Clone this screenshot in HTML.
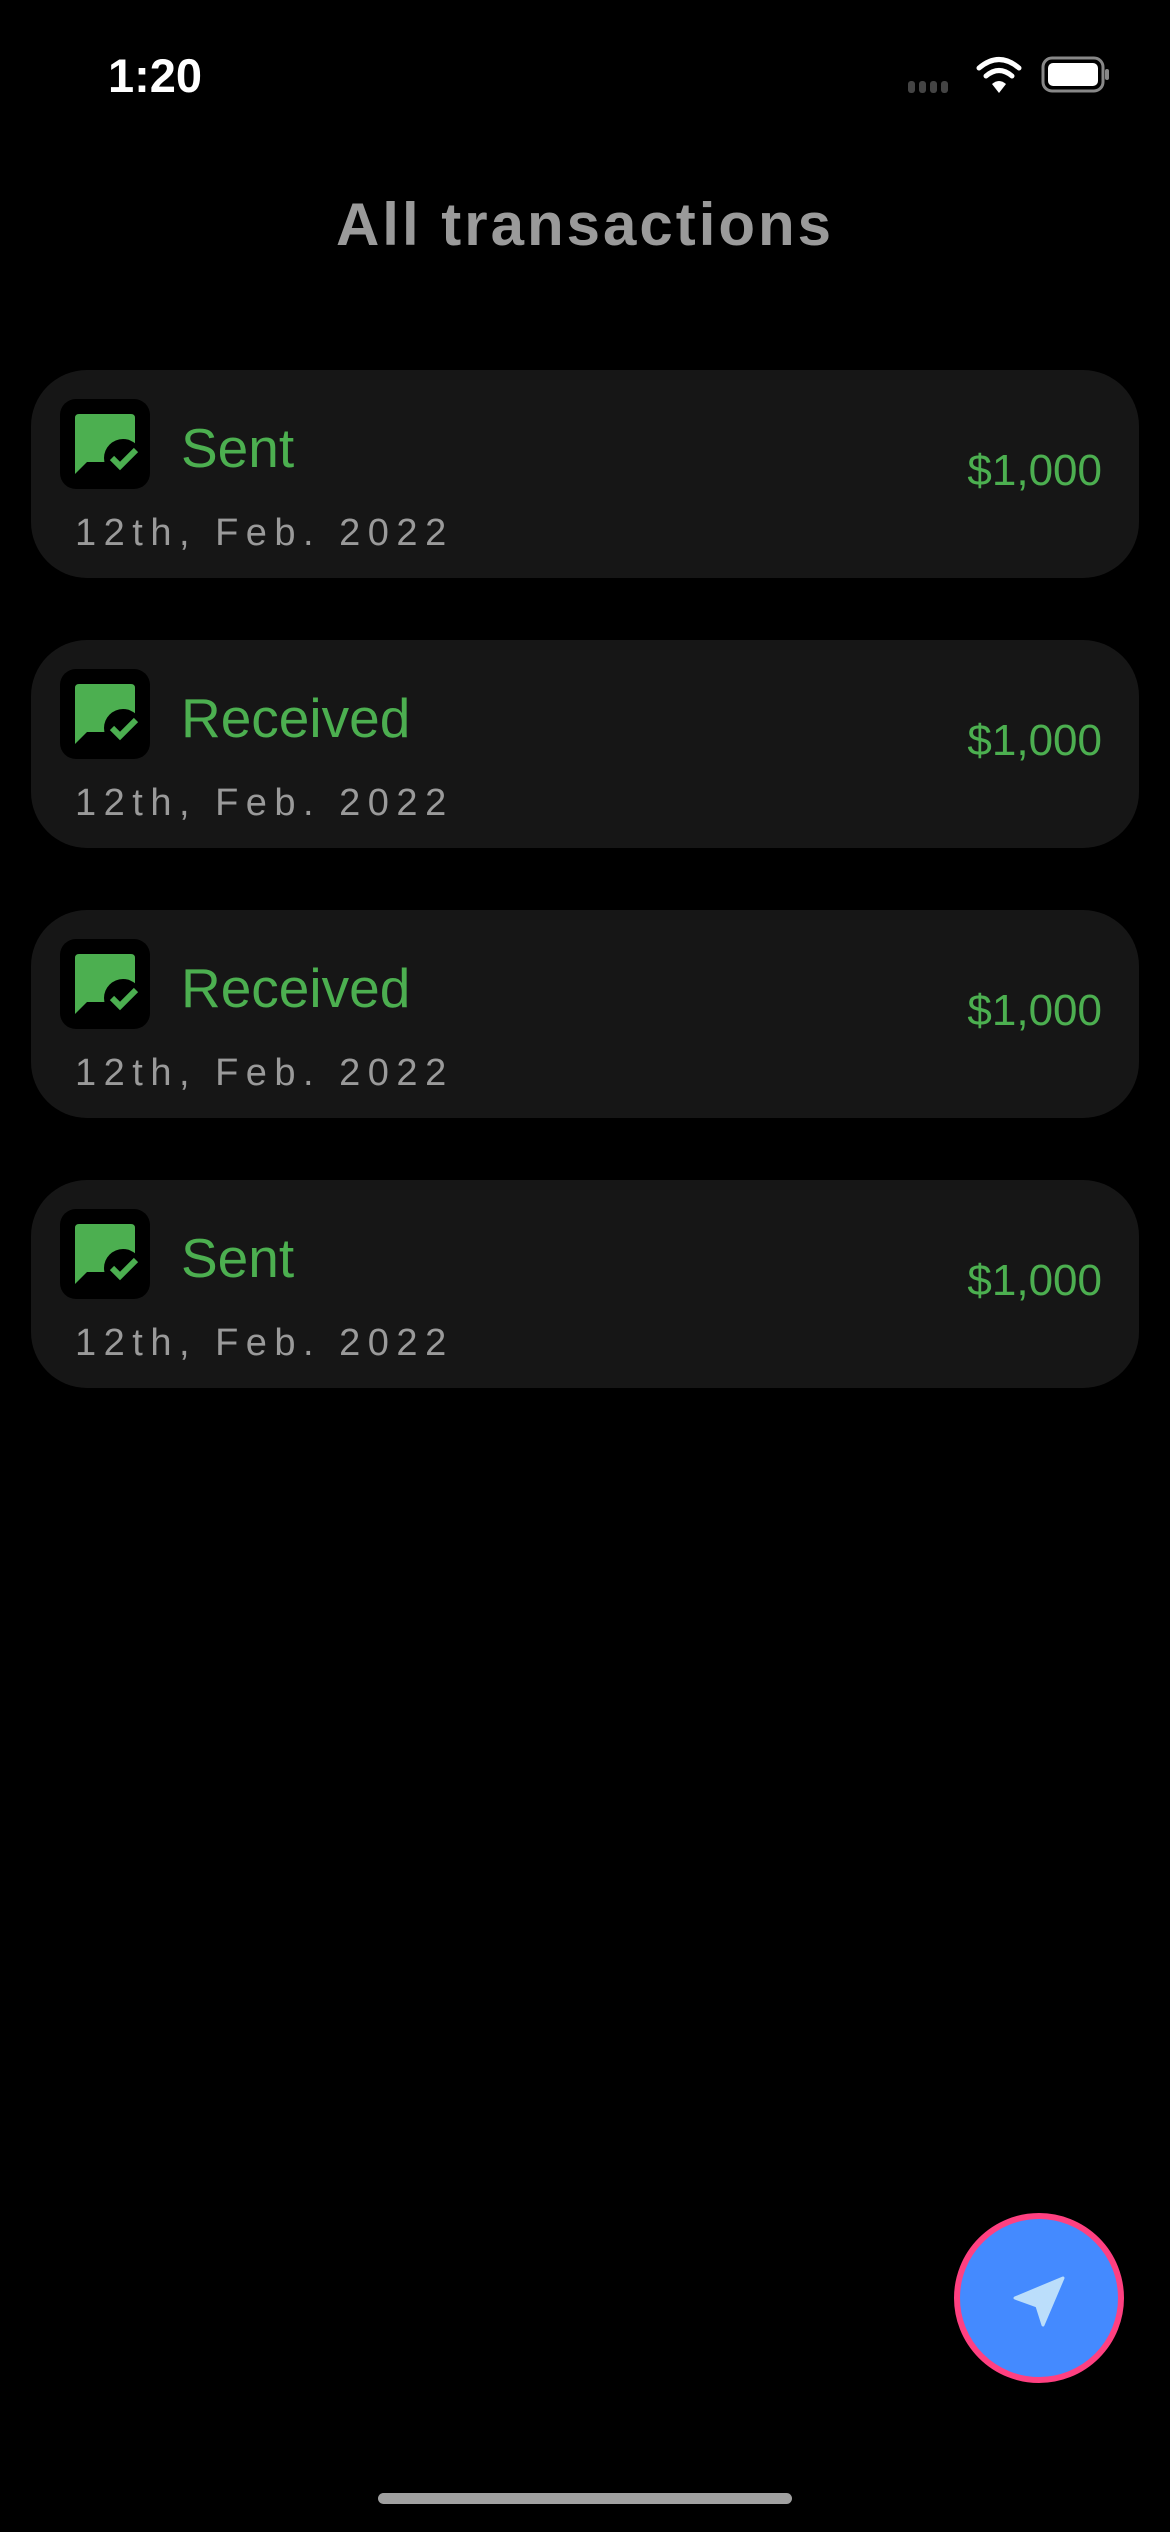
<!DOCTYPE html>
<html><head><meta charset="utf-8"><style>
html,body{margin:0;padding:0;background:#000;}
body{width:1170px;height:2532px;position:relative;overflow:hidden;font-family:"Liberation Sans",sans-serif;}
.time{position:absolute;left:108px;top:48px;font-size:47px;font-weight:bold;color:#fff;}
.title{position:absolute;left:0;width:1170px;top:190px;text-align:center;font-size:60px;font-weight:bold;color:#9a9a9a;letter-spacing:3px;}
.card{position:absolute;left:31px;width:1108px;height:208px;background:#161616;border-radius:56px;}
.icon{position:absolute;left:29px;top:29px;width:90px;height:90px;background:#000;border-radius:16px;}
.name{position:absolute;left:150px;top:46px;font-size:55px;color:#4caf50;}
.date{position:absolute;left:44px;top:142px;font-size:38px;color:#9a9a9a;letter-spacing:7.5px;}
.amt{position:absolute;right:37px;top:76px;font-size:44px;color:#4caf50;}
.fab{position:absolute;left:954px;top:2213px;width:158px;height:158px;border-radius:50%;background:#448aff;border:6px solid #ff4081;}
.home{position:absolute;left:378px;top:2493px;width:414px;height:11px;border-radius:6px;background:#a0a0a0;}
</style></head><body>
<div class="time">1:20</div>
<svg style="position:absolute;left:905px;top:50px" width="210" height="50" viewBox="0 0 210 50">
<g fill="#444"><rect x="3" y="31" width="7" height="12" rx="3"/><rect x="14" y="31" width="7" height="12" rx="3"/><rect x="25" y="31" width="7" height="12" rx="3"/><rect x="36" y="31" width="7" height="12" rx="3"/></g>
<g fill="none" stroke="#fff" stroke-width="5" stroke-linecap="round"><path d="M74 18 Q94 1 114 18"/><path d="M81 26 Q94 15 107 26"/></g>
<path d="M87 34 Q94 28 101 34 L94 43 Z" fill="#fff"/>
<rect x="138" y="8" width="60" height="33" rx="9" fill="none" stroke="#888" stroke-width="3"/>
<rect x="143" y="13" width="50" height="23" rx="5" fill="#fff"/>
<rect x="200" y="19" width="4" height="11" rx="2" fill="#888"/>
</svg>
<div class="title">All transactions</div>

<div class="card" style="top:370px"><div class="icon"><svg width="90" height="90" viewBox="0 0 90 90"><path d="M19 15 H71 Q75 15 75 19 V63 H27 L15 75 V19 Q15 15 19 15Z" fill="#4caf50"/><circle cx="63" cy="59" r="19" fill="#000"/><path d="M52 59 L60 67 L76 51" fill="none" stroke="#4caf50" stroke-width="6"/></svg></div><div class="name">Sent</div><div class="date">12th, Feb. 2022</div><div class="amt">$1,000</div></div>
<div class="card" style="top:640px"><div class="icon"><svg width="90" height="90" viewBox="0 0 90 90"><path d="M19 15 H71 Q75 15 75 19 V63 H27 L15 75 V19 Q15 15 19 15Z" fill="#4caf50"/><circle cx="63" cy="59" r="19" fill="#000"/><path d="M52 59 L60 67 L76 51" fill="none" stroke="#4caf50" stroke-width="6"/></svg></div><div class="name">Received</div><div class="date">12th, Feb. 2022</div><div class="amt">$1,000</div></div>
<div class="card" style="top:910px"><div class="icon"><svg width="90" height="90" viewBox="0 0 90 90"><path d="M19 15 H71 Q75 15 75 19 V63 H27 L15 75 V19 Q15 15 19 15Z" fill="#4caf50"/><circle cx="63" cy="59" r="19" fill="#000"/><path d="M52 59 L60 67 L76 51" fill="none" stroke="#4caf50" stroke-width="6"/></svg></div><div class="name">Received</div><div class="date">12th, Feb. 2022</div><div class="amt">$1,000</div></div>
<div class="card" style="top:1180px"><div class="icon"><svg width="90" height="90" viewBox="0 0 90 90"><path d="M19 15 H71 Q75 15 75 19 V63 H27 L15 75 V19 Q15 15 19 15Z" fill="#4caf50"/><circle cx="63" cy="59" r="19" fill="#000"/><path d="M52 59 L60 67 L76 51" fill="none" stroke="#4caf50" stroke-width="6"/></svg></div><div class="name">Sent</div><div class="date">12th, Feb. 2022</div><div class="amt">$1,000</div></div>

<div class="fab"><svg width="158" height="158" viewBox="0 0 158 158"><path d="M55 79 L103 59 L83 106 L77 87 Z" fill="#bbdefb" stroke="#bbdefb" stroke-width="3" stroke-linejoin="round"/></svg></div>
<div class="home"></div>
</body></html>
